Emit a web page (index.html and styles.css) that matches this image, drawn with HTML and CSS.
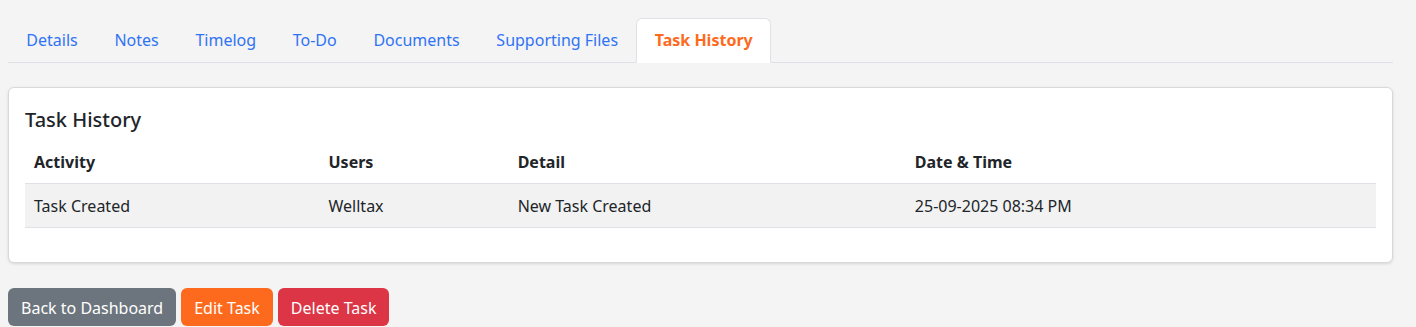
FILE: index.html
```html
<!DOCTYPE html>
<html lang="en">
<head>
    <meta charset="UTF-8">
    <meta name="viewport" content="width=device-width, initial-scale=1.0">
    <title>Task History</title>
    <link rel="stylesheet" href="styles.css">
</head>
<body>
    <!-- 탭 메뉴 -->
    <ul class="tabs">
        <li><a href="#" class="tab_link">Details</a></li>
        <li><a href="#" class="tab_link">Notes</a></li>
        <li><a href="#" class="tab_link">Timelog</a></li>
        <li><a href="#" class="tab_link">To-Do</a></li>
        <li><a href="#" class="tab_link">Documents</a></li>
        <li><a href="#" class="tab_link">Supporting Files</a></li>
        <li><a href="#" class="tab_link active">Task History</a></li>
    </ul>

    <!-- 히스토리 카드 -->
    <div class="card">
        <h5 class="card_title">Task History</h5>
        <table class="history">
            <thead>
                <tr>
                    <th class="col_act">Activity</th>
                    <th class="col_user">Users</th>
                    <th class="col_detail">Detail</th>
                    <th>Date &amp; Time</th>
                </tr>
            </thead>
            <tbody>
                <tr>
                    <td>Task Created</td>
                    <td>Welltax</td>
                    <td>New Task Created</td>
                    <td>25-09-2025 08:34 PM</td>
                </tr>
            </tbody>
        </table>
    </div>

    <!-- 하단 버튼 -->
    <div class="actions">
        <button type="button" class="btn btn_gray">Back to Dashboard</button>
        <button type="button" class="btn btn_orange">Edit Task</button>
        <button type="button" class="btn btn_red">Delete Task</button>
    </div>
</body>
</html>
```

FILE: styles.css
```css
body{
    margin: 0; padding: 18px 23px 0 8px;
    background-color: #f4f4f4;
    font-family: "Noto Sans", "Open Sans", sans-serif;
    font-size: 16px; line-height: 24px; color: #212529;
}
/* 탭 */
.tabs{
    display: flex; list-style: none; margin: 0; padding: 0;
    border-bottom: 1px solid #dee2e6;
}
.tabs li{margin-bottom: -1px;}
.tab_link{
    display: block; padding: 9px 17.35px 10px;
    border: 1px solid transparent; border-radius: 6px 6px 0 0;
    color: #2f73f5; text-decoration: none;
}
.tab_link.active{
    background-color: #fff; border-color: #dee2e6 #dee2e6 #fff;
    color: #fd6a1d; font-weight: bold;
}
/* 카드 */
.card{
    margin-top: 24px; padding: 20px 16px 34px;
    background-color: #fff; border: 1px solid #d9d9d9;
    border-radius: 6px; box-shadow: 0 1px 3px rgba(0,0,0,0.12);
}
.card_title{
    margin: 0 0 9px; font-size: 20px; font-weight: 500; line-height: 24px;
}
.history{width: 100%; border-collapse: collapse;}
.history th, .history td{
    padding: 9px 9px; text-align: left; border-bottom: 1px solid #dee2e6;
}
.history td{padding-top: 10px;}
.history th{font-weight: bold;}
.history tbody tr{background-color: #f2f2f2;}
.col_act{width: 21.8%;}
.col_user{width: 14%;}
.col_detail{width: 29.4%;}
/* 버튼 */
.actions{display: flex; gap: 5px; margin-top: 25px;}
.btn{
    padding: 7px 12px 5px; border: 1px solid transparent; border-radius: 6px;
    font-family: inherit; font-size: 16px; line-height: 24px; color: #fff;
}
.btn_gray{background-color: #6c757d;}
.btn_orange{background-color: #fd6a1d;}
.btn_red{background-color: #dc3545;}
```
